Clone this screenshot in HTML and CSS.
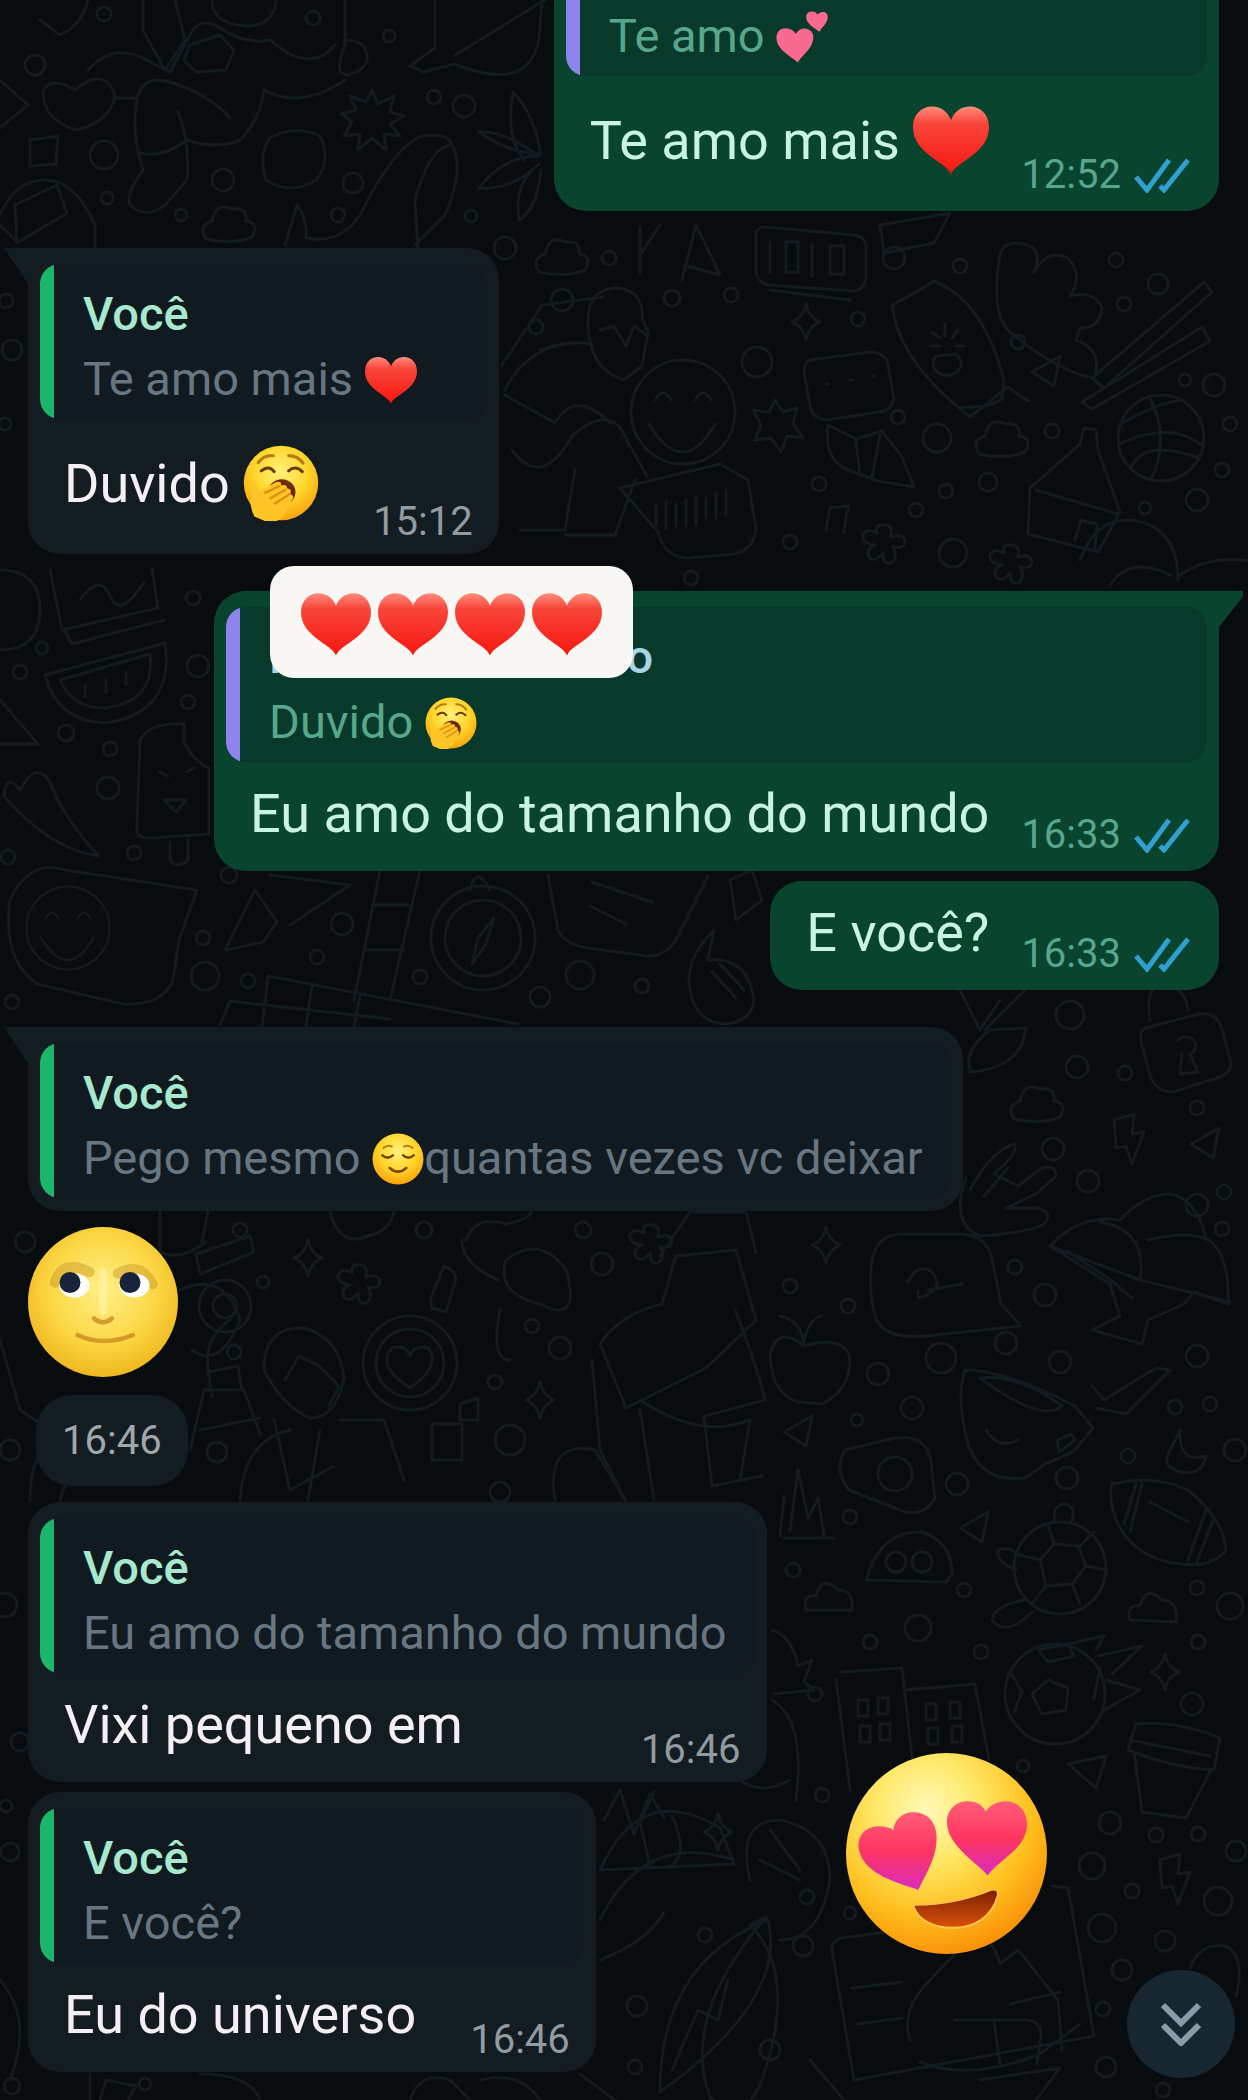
FILE: index.html
```html
<!DOCTYPE html>
<html lang="pt-BR">
<head>
    <meta charset="UTF-8">
    <meta name="viewport" content="width=device-width, initial-scale=1.0">
    <title>Conversa</title>
    <link rel="stylesheet" href="styles.css">
</head>
<body>
    <!-- emoji e ícones -->
    <svg class="sprites" width="0" height="0" aria-hidden="true">
        <defs>
            <linearGradient id="red" x1="0" y1="0" x2="0" y2="1">
                <stop offset="0" stop-color="#ff8d7c"/>
                <stop offset=".25" stop-color="#f9453a"/>
                <stop offset="1" stop-color="#f7170f"/>
            </linearGradient>
            <linearGradient id="pink" x1="0" y1="0" x2="0" y2="1">
                <stop offset="0" stop-color="#ff5d78"/>
                <stop offset=".5" stop-color="#fd3560"/>
                <stop offset="1" stop-color="#d92bc0"/>
            </linearGradient>
            <radialGradient id="face" cx=".5" cy=".35" r=".65">
                <stop offset="0" stop-color="#fff27a"/>
                <stop offset=".55" stop-color="#ffd62b"/>
                <stop offset="1" stop-color="#f9a30c"/>
            </radialGradient>
            <radialGradient id="glow" cx=".4" cy=".28" r=".75">
                <stop offset="0" stop-color="#fff9b8"/>
                <stop offset=".35" stop-color="#ffe866"/>
                <stop offset=".7" stop-color="#ffbf1d"/>
                <stop offset="1" stop-color="#f98e08"/>
            </radialGradient>
            <radialGradient id="lunar" cx=".5" cy=".42" r=".6">
                <stop offset="0" stop-color="#fff08a"/>
                <stop offset=".6" stop-color="#fbd743"/>
                <stop offset="1" stop-color="#eeb41c"/>
            </radialGradient>
            <linearGradient id="mouth" x1="0" y1="0" x2="0" y2="1">
                <stop offset="0" stop-color="#7c1f06"/>
                <stop offset="1" stop-color="#d95309"/>
            </linearGradient>
        </defs>
        <symbol id="heart" viewBox="0 0 100 100">
            <path fill="url(#red)" d="M50 95C43 78 0 68 0 33 0 16 12 6 25 6c12 0 21 7 25 18C54 13 63 6 75 6c13 0 25 10 25 27 0 35-43 45-50 62z"/>
        </symbol>
        <symbol id="two-hearts" viewBox="0 0 100 100">
            <path fill="#f96a90" d="M42 99C30 88 3 76 1 54 0 40 8 33 18 33c9 0 16 4 20 11 4-8 13-12 21-10 10 3 15 11 12 23-5 20-22 28-29 42z"/>
            <path fill="#f96a90" d="M84 40C75 33 58 25 58 12 58 4 64 0 70 1c5 0 8 3 10 6 3-4 8-6 12-5 6 1 9 7 7 14-3 11-11 15-15 24z"/>
        </symbol>
        <symbol id="yawn" viewBox="0 0 100 100">
            <circle cx="50" cy="50" r="49" fill="url(#face)"/>
            <path d="M20 23q8-10 20-9M60 14q12 0 19 10" fill="none" stroke="#b57b10" stroke-width="4" stroke-linecap="round"/>
            <path d="M24 34q10-8 17 1M60 34q9-8 18 1" fill="none" stroke="#6d3b08" stroke-width="4" stroke-linecap="round"/>
            <ellipse cx="51" cy="62" rx="18" ry="17" fill="#6b2b08"/>
            <path d="M15 94Q7 80 12 60q2-9 7-6l2 8 22-13q8-2 7 4 8-2 8 4 7 1 4 7 7 3 2 9L53 94q-8 9-22 7z" fill="#ffc526"/>
            <path d="M29 63l19-9M36 70l20-11M42 77l19-12" fill="none" stroke="#dc8f11" stroke-width="3" stroke-linecap="round"/>
        </symbol>
        <symbol id="relieved" viewBox="0 0 100 100">
            <circle cx="50" cy="50" r="49" fill="url(#face)"/>
            <path d="M22 29q8-7 16-3M62 26q9-4 16 3" fill="none" stroke="#bb7e12" stroke-width="4" stroke-linecap="round"/>
            <path d="M20 43q10 9 20 0M60 43q10 9 20 0M34 67q16 15 32 0" fill="none" stroke="#7a450b" stroke-width="5" stroke-linecap="round"/>
        </symbol>
        <symbol id="moon-face" viewBox="0 0 100 100">
            <circle cx="50" cy="50" r="50" fill="url(#lunar)"/>
            <path d="M18 37q5-16 23-7M60 31q15-8 23 7" fill="none" stroke="#c08a20" stroke-width="7" stroke-linecap="round" opacity=".4"/>
            <ellipse cx="31" cy="39" rx="10" ry="8" fill="#fff"/>
            <ellipse cx="71" cy="39" rx="10" ry="8" fill="#fff"/>
            <circle cx="28" cy="37" r="7" fill="#17243b"/>
            <circle cx="68" cy="37" r="7" fill="#17243b"/>
            <path d="M44 61q6 5 12 0M33 72q17 8 37 0" fill="none" stroke="#c98b20" stroke-width="3" stroke-linecap="round" opacity=".8"/>
            <path d="M50 30v26" stroke="#fff4a6" stroke-width="5" stroke-linecap="round" opacity=".7"/>
        </symbol>
        <symbol id="heart-eyes" viewBox="0 0 200 200">
            <circle cx="100" cy="100" r="100" fill="url(#glow)"/>
            <path fill="url(#pink)" d="M72 136C54 130 18 121 13 97 10 82 20 74 31 73c7 0 13 1 16 4C48 66 57 58 69 59c15 1 23 14 21 31-2 18-11 31-18 46z"/>
            <path fill="url(#pink)" d="M141 122c-10-12-36-27-40-48-3-15 7-26 20-26 9 0 15 4 18 10 4-6 12-10 20-10 14 0 22 12 21 26-3 23-27 31-39 48z"/>
            <path fill="url(#mouth)" stroke="#ffc24a" stroke-width="2" d="M69 151q40 0 76-15c5-1 7 1 6 6-6 22-24 32-45 32-20 0-33-8-38-19-1-3-1-4 1-4z"/>
        </symbol>
        <symbol id="ticks" viewBox="0 0 58 36">
            <path d="M3 20l11 13L36 3M27 29l4 4L55 3" fill="none" stroke="#2fa0cf" stroke-width="5"/>
        </symbol>
    </svg>

    <div class="chat">
        <svg class="wallpaper" viewBox="0 0 1248 2100" preserveAspectRatio="xMidYMid slice" aria-hidden="true">
            <defs>
                <path id="spark" d="M0-18q3 14 14 18-11 4-14 18-3-14-14-18 11-4 14-18z"/>
                <path id="cloud" d="M-24 14q-8-14 6-18 4-20 20-12 16-2 14 12 14 2 6 16-20 8-46 2z"/>
                <path id="flower" d="M0-20q8 0 6 12 12-4 14 4 0 8-12 6 6 10-2 16-8 2-8-10-8 10-14 4-4-8 6-12-14-2-12-10 4-8 14-2-2-10 8-8z"/>
                <path id="tri" d="M-14 2L14-14 8 16z"/>
                <path id="bolt" d="M-14-20L6-26 4-6 16-8 4 24-2 6-12 8z"/>
                <g id="smile"><circle r="52"/><path d="M-28-12q8-14 16 0M12-12q8-14 16 0M-34 12q34 56 66 0"/></g>
                <g id="ball"><circle r="43"/><path d="M-40-14Q-6-34 20-38M-42 6Q10-18 42 8M-30 30Q-18 0 38 20M-12-42Q10 0-10 42"/></g>
                <path id="bubble" d="M-62-26q6-22 30-22h56q30 0 34 30l8 40 20 22-96 10q-42 4-50-20-8-30-2-60z"/>
            </defs>
            <!-- topo -->
            <path d="M88 70q27-30 62-8l20 10 20-37q10-20 30-7 25 17 50 12 40 35 65 5M138 95q7-20 32-13 40 13 60 36M138 95q-8 35 5 75-18 25-13 35 15 15 35 0l22-25q3-40-9-68M138 152q22 8 49-12 28 10 53 0 20-20 24-50 36 20 81-10M143 0v30l22 40 20-30-10-40M345 0v45q-12 30 2 30 22-5 20-20-2-15-22-15M0 80l28 25L0 128M40 20l20 15Q82 25 88 0M212 0q0 24 34 26 28 0 30-26"/>
            <path d="M75 90Q50 75 43 92q0 28 34 38 33-8 38-34Q105 65 75 90zM115 98h20M190 45l30-10 14 15-8 20-30 2-12-12zM435 0v48l-25 18 14 6 30-8q75 30 85-25l3-39M455 55L545 0"/>
            <path d="M372 90l6 14 16-8-4 16 14 4-14 8 10 12-16-2 2 16-14-12-14 12 2-16-16 2 8-14-10-8 14-4-6-14 16 6zM270 138q25-14 50-2 12 24-4 44-26 16-50 0-8-26 4-42zM285 245l12-40q11 15 9 33 34 7 54-23 40-80 70-80 20 0 22 10-22 0-37 55l3 50M452 145q13 25-7 70l-30 30M525 160q-20-20-12-68 20 20 28 62-30 0-62-22 24-2 60 24-36 0-60 32 34 2 60-24-26 20-20 56 18-10 22-50"/>
            <path d="M30 140l28-4-2 28-26 2zM0 215q15-35 45-35t50 45v25M15 205l42-20 10 28-50 30zM0 225l18 18"/>
            <use href="#cloud" x="230" y="225"/>
            <!-- direita, entre o topo e a resposta -->
            <use href="#cloud" x="563" y="258"/>
            <path d="M640 228v45M660 225l-20 30M682 280l14-55 24 50-36-10M756 235q0-8 10-8l88 8q12 2 12 12v30q-2 14-14 14l-84-6q-12-4-12-14zM770 242v30M786 242v30h12v-30zM812 244v32M830 246v28h14v-28zM770 290l80 10M880 225l70-12-16 30-50 10zM1000 254q4-14 24-10t10 28q14-24 34-14 16 18 2 38 24-6 32 12-2 20-22 20l-4 12q28 10 18 38-36-6-84-46-20-18-10-78zM892 305q20-10 42-24 50 20 70 100l-2 18q-14 10-44 8-60-50-66-102zM958 407l12 10 38-30 20 14"/>
            <path d="M945 324v12M932 332l8 6M958 330l-6 8M930 346h10M964 346h-8M936 356a14 12 0 1 0 20-2z"/>
            <path d="M1092 378l112-96 8 10-108 96zM1082 402l120-75 8 14-118 68zM588 320q0-30 28-32 28 2 26 30l6 14-6 34-18 14q-36-10-36-60zM600 330l14-4 12 20 8-20 14 10M540 350q30-10 50-6M505 390q20-40 60-46M505 395l50 28q20-35 55 0M512 450q30 40 60-14 40-35 55 5l20 35M575 470l-10 60H520M635 480l-20 55h-50M810 360l60-8q16 0 18 14l6 32q-2 12-14 14l-54 8q-14-2-16-14l-6-34q0-10 6-12zM826 384h2M850 380h2M872 376h2"/>
            <path d="M828 425l28 14 26-8 20 26 12 30-36-6-32-12q-22-10-18-44zM856 440l4 36M880 434l-8 44M775 400l8 12 14-4-4 16 10 14-16-2-6 16-10-14-16 2 6-16-8-14 16 2zM620 488l100-24 28 16 8 48q-2 22-22 26l-44 4q-26 0-32-26zM656 506v18M666 502v26M676 504v22M686 500v26M696 496v28M706 498v20M716 494v24M726 490v24M1030 488l50-44 4-16 12 2 2 20 22 62-22 40-70-18zM1036 490l82 24M1075 540l6-20 16 4-2 24M826 530l4-22 18-2-4 26M502 365l40-60 60-8M1080 560q14-40 48-40 50 4 50 60M1180 575q30-20 68-14M1110 585q20-30 60-10"/>
            <use href="#smile" x="683" y="412"/><use href="#ball" x="1161" y="438"/>
            <use href="#spark" x="806" y="322"/><use href="#tri" x="1046" y="370"/><use href="#flower" x="1012" y="565"/><use href="#flower" x="885" y="545"/><use href="#cloud" x="1003" y="440"/>
            <!-- esquerda, meio -->
            <path d="M0 570q40 0 40 40t-40 40M50 570l12 60 96-22-6-40M64 630l8 14 92-24M80 600q20-28 30-4t34-14M45 675l120-32q10 70-60 80-48-2-60-48zM60 680l90-26q6 48-46 54-32 0-44-28zM85 686v10M106 680v12M126 672v12M0 700l38 44H0M140 740q10-18 44-16v18q10 20 25 26v66l-60 4q-14 0-12-12zM160 772l8 4M186 772l8-4M164 800h22l-10 12zM170 842v18q8 10 18 0v-20M20 790q16-30 30-8 10 30 48 74-50-8-94-60 2-24 16-6z"/>
            <path d="M15 890q20-30 50-20l132 20-18 50-6 40q-10 26-50 24l-86-20Q2 960 10 900zM225 950l30-60 22 32-14 20-36 8zM270 875l80 10-60 40M380 870l-26 130M420 870l-30 130M372 905h36M366 950h38M220 1025l10-24 160 18M268 976l250 48M268 976l-6 50M312 986l-6 40M360 996l-6 30M548 875l10 55q6 14 30 18l60 8q20 0 30-20l30-60M592 882l60 20M590 906l36 18M690 990q-6-30 24-60l-6 30q40-4 46 40-2 20-26 24-32 0-38-34zM712 972l24 26M720 964l24 26M730 880l22-10 10 30-26 20z"/>
            <circle cx="483" cy="938" r="52"/><circle cx="483" cy="938" r="38"/><path d="M494 918l-8 26-14 20 6-26zM470 890q6-26 20 0"/>
            <use href="#smile" transform="translate(68 928) scale(.8)"/>
            <!-- direita, embaixo da conversa -->
            <path d="M1145 1028l54-14q16-2 22 12l10 36q0 12-14 16l-44 14q-16 0-22-14l-10-36q-2-10 4-14zM1150 1020q-6-40 18-32 16-2 20 22M1178 1040a10 9 0 1 1 12 14l8 18-18 2 2-20M970 1070q-6-20 20-40l36-2q-4 40-56 44M960 990l20 40 20-30M985 1030l40-40M970 1190q20-38 44-46 6 8-20 30l24 12 24-18q14-4 14 8l-20 18-30 14h32q14 4 8 14-10 10-66 14-30-12-14-58M984 1196l24-28M1050 1246q30-32 70-26 24-26 50-26 26 4 36 44 24 14 22 66l-34-12-10 12-36 16-6 24-50-14 28-14-10-32zM1050 1246l90 34q8-50-40-58M1140 1280l90 22M1148 1240q40-10 60 0M1068 1252l40 26 24 20"/>
            <use href="#bubble" x="935" y="1282"/><path d="M908 1282q10-20 24-10 12 14-4 22-12 8-10-2M928 1290l34-6"/>
            <path d="M804 1346q-28-22-34 10 2 38 28 46l24 2q28-14 28-44-4-26-46-14zM804 1346q-2-26-24-30M804 1340q6-22 18-24M965 1370q40 0 110 36l18 22-20 24-28 12-20 14q-50 6-60-46-8-40 0-62zM980 1378q40-4 82 28-20 18-82-28zM986 1430q12 20 32 10M1075 1440l-16 12-2-12 14-6zM1092 1386l12 14 52-32 14 2-44 44-30-6M1170 1450l10-20q-2 34 26 26-4 20-24 16-22-4-12-22zM845 1450l50-12q32-4 36 24l4 36q-10 18-30 14l-56-22q-16-20-4-40z"/>
            <circle cx="895" cy="1474" r="17"/>
            <path d="M1112 1484q44-10 76 6 36 30 38 60-14 18-44 14-48-4-66-44-8-24-4-36zM1136 1484l-12 40M1142 1484l-12 48M1206 1510l-18 50M1214 1518l-18 46M1150 1502l38 20M866 1580q14-50 56-48 30 10 30 42l-6 8zM784 1538h50M780 1536l4-40M790 1530l8-60 10 48 10-20 6 38M806 1610q-4-16 10-14 6-22 22-6 16 0 14 20zM1130 1620q-4-16 10-14 6-22 22-6 16 0 14 22z"/>
            <circle cx="896" cy="1562" r="10"/><circle cx="922" cy="1562" r="10"/>
            <circle cx="1060" cy="1568" r="46"/><path d="M1040 1560l14-16 24 2 8 20-14 18-26 2zM1054 1544l-6-20M1080 1546l14-14M1086 1566l20 4M1072 1584l8 20M1046 1586l-14 18M1040 1560l-24-6M1055 1522q-4-18 12-18 10 6 4 18M1016 1570q-20-8-18-20 12-4 22 6M1024 1600q-30 6-32 20 14 18 40-8"/>
            <circle cx="1055" cy="1694" r="50"/><path d="M1032 1694l16-14 20 8-2 22-24 4zM1038 1650l30-6 6 12-26 6zM1010 1672l12 20-8 20M1100 1668l-6 30M1060 1646l44-10-8 14M1098 1656l44-10-30 28M1106 1680l34 10-36 20"/>
            <path d="M842 1672l60-4 10 90M836 1680l14 110M905 1690l70-6 14 76M858 1700h10v16h-10zM878 1698h10v16h-10zM860 1726h10v16h-10zM880 1724h10v16h-10zM926 1704h10v16h-10zM950 1702h10v16h-10zM928 1728h10v16h-10zM952 1726h10v16h-10zM1136 1724q40-4 84 14l-6 32q-40-2-86-20zM1134 1752l8 60 44 6 24-46M1130 1740l80 16M1068 1764l38-8-10 32z"/>
            <path d="M832 1950q0-10 10-12l60-8M832 1950l22 130 240-44-26-148-16-2M910 2040q-10-30 20-60l40-42q20-8 30 26l18-14 40 50 4 50M920 2062q50 20 120-8l40-30M955 2020h70q16 0 16 16l-4 28M994 2020l6 44M1010 2004l50-12M852 1988l50-6M858 2024l44-6M810 2060l34 40M1190 1968q10-26 36-22 20 10 10 50M980 2080l80-12-24 32"/>
            <!-- esquerda, embaixo -->
            <path d="M160 1212v40q20 10 46-10M208 1212l-6 30M196 1254l54-18 4 16-54 22zM180 1290q44-20 60 30-20 50-48 30M330 1212q10 36 38 24 24-6 26-26M466 1240q10-26 40-16 30-6 24-16M462 1240q0 24 36 40M506 1260q34-26 60 10 16 56-26 34-44-10-34-44zM430 1300l14-34q16 6 10 20l-8 26-14-4zM600 1344q20-30 62-40l14-48 60-6 20 70-50 48-80 40zM660 1256l30-44h56l10 40M592 1360l8 90 20 40M640 1400q60 40 110 20l-10 60M735 1310q20 50 30 90l-60 16M640 1410l14 90M704 1416l8 70 50-10"/>
            <circle cx="410" cy="1363" r="47"/><circle cx="410" cy="1363" r="34"/><path d="M410 1388q-34-22-18-40 14-4 18 8 4-12 18-8 14 18-18 40z"/>
            <path d="M264 1370q0-44 40-42 36 10 40 50-8 40-34 40-28-12-46-48zM285 1380l14-24 20 10 20 20-10 20M230 1320q-30 20-20 60M190 1450l14-60h40l16 44M212 1396l-4-24 30-6 4 24M200 1430l60-12M274 1420l16 70 44-24M240 1500q4-60 50-70M340 1420h44l20 60M320 1430l-12 70M432 1424h30v36h-30zM460 1420v-16l18-6v22zM0 1340l20 70 30 20M30 1500q0-60 40-70M60 1500q10-40 50-40M555 1500q-10-60 40-50l30 50M500 1310q-10 50 10 50"/>
            <path d="M772 1630q20 6 26 36l14-6-8 22 10 8-40 4M772 1700q34 20 24 100M600 1870q40-90 120-42l14 36zM600 1920q44-90 134-60M600 1960q50-20 64-48M650 1866l-10-44 14-30M670 1866q20-10 2-50M604 1820l16-30 14 44 16-40 14 24M750 1925q50 50 10 160-20 40-50 12-30-80 56-180zM660 2092q0-130 108-172 20 80-108 172zM672 2070l26-60 20 10 10-40M750 1880q-14-60 30-60 50 10 50 60-10 60-50 60M770 1830l30 40M760 1860l40 20M730 1770q24 30 60 10M0 1980q34 40 10 100M90 2074v26M100 2100l6-20 30 6-8 14M200 2074q50 0 60 26M410 2100q10-30 40-20l20 20M580 2074l40 30M480 2080q40-10 60 20"/>
            <use href="#flower" x="360" y="1285"/><use href="#flower" x="652" y="1245"/><use href="#spark" x="308" y="1258"/><use href="#spark" x="540" y="1400"/><use href="#spark" x="1165" y="1672"/><use href="#spark" x="718" y="1832"/><use href="#spark" x="826" y="1245"/><use href="#cloud" x="1038" y="1105"/><use href="#bolt" x="1128" y="1140"/><use href="#tri" x="1205" y="1142"/><use href="#tri" x="974" y="1526"/><use href="#tri" x="798" y="1430"/><use href="#bolt" x="1174" y="1880"/>
            <!-- bolinhas -->
            <g>
                <circle cx="104" cy="14" r="7"/><circle cx="35" cy="65" r="10"/><circle cx="313" cy="18" r="7"/><circle cx="389" cy="36" r="6"/><circle cx="104" cy="155" r="14"/><circle cx="223" cy="180" r="11"/><circle cx="353" cy="183" r="10"/><circle cx="434" cy="97" r="7"/><circle cx="464" cy="106" r="11"/><circle cx="107" cy="198" r="6"/><circle cx="181" cy="215" r="6"/><circle cx="338" cy="215" r="7"/><circle cx="471" cy="216" r="6"/><circle cx="505" cy="248" r="11"/>
                <circle cx="609" cy="258" r="7"/><circle cx="562" cy="300" r="11"/><circle cx="536" cy="327" r="7"/><circle cx="672" cy="298" r="8"/><circle cx="731" cy="295" r="7"/><circle cx="894" cy="258" r="11"/><circle cx="960" cy="266" r="7"/><circle cx="1116" cy="260" r="7"/><circle cx="1158" cy="284" r="10"/><circle cx="1124" cy="304" r="7"/><circle cx="858" cy="319" r="7"/><circle cx="757" cy="362" r="15"/><circle cx="937" cy="438" r="14"/><circle cx="898" cy="417" r="7"/><circle cx="1018" cy="342" r="7"/><circle cx="1214" cy="385" r="11"/><circle cx="1185" cy="380" r="6"/><circle cx="1052" cy="431" r="7"/><circle cx="1230" cy="424" r="7"/><circle cx="819" cy="484" r="7"/><circle cx="946" cy="491" r="7"/><circle cx="988" cy="482" r="9"/><circle cx="916" cy="510" r="7"/><circle cx="790" cy="542" r="7"/><circle cx="953" cy="553" r="14"/><circle cx="1197" cy="500" r="11"/><circle cx="1145" cy="508" r="6"/><circle cx="1222" cy="470" r="7"/><circle cx="691" cy="578" r="7"/>
                <circle cx="6" cy="301" r="7"/><circle cx="12" cy="350" r="10"/><circle cx="5" cy="424" r="6"/>
                <circle cx="193" cy="598" r="7"/><circle cx="42" cy="648" r="6"/><circle cx="20" cy="672" r="7"/><circle cx="198" cy="666" r="11"/><circle cx="188" cy="702" r="7"/><circle cx="66" cy="733" r="8"/><circle cx="110" cy="749" r="7"/><circle cx="108" cy="788" r="11"/><circle cx="134" cy="853" r="7"/><circle cx="8" cy="857" r="7"/><circle cx="229" cy="875" r="8"/><circle cx="342" cy="924" r="11"/><circle cx="203" cy="938" r="7"/><circle cx="317" cy="957" r="7"/><circle cx="205" cy="976" r="14"/><circle cx="248" cy="981" r="7"/><circle cx="420" cy="977" r="7"/><circle cx="580" cy="975" r="14"/><circle cx="540" cy="997" r="10"/><circle cx="642" cy="986" r="7"/><circle cx="12" cy="1002" r="7"/>
                <circle cx="1070" cy="1015" r="14"/><circle cx="1077" cy="1067" r="11"/><circle cx="1125" cy="1073" r="7"/><circle cx="1053" cy="1149" r="11"/><circle cx="1088" cy="1181" r="11"/><circle cx="1197" cy="1108" r="7"/><circle cx="1197" cy="1205" r="11"/><circle cx="1224" cy="1192" r="7"/><circle cx="1222" cy="1229" r="7"/><circle cx="1015" cy="1267" r="7"/><circle cx="1045" cy="1295" r="11"/><circle cx="1006" cy="1343" r="11"/><circle cx="1060" cy="1362" r="11"/><circle cx="1197" cy="1356" r="11"/><circle cx="941" cy="1358" r="15"/><circle cx="878" cy="1374" r="11"/><circle cx="912" cy="1408" r="11"/><circle cx="857" cy="1420" r="6"/><circle cx="790" cy="1286" r="7"/><circle cx="848" cy="1306" r="7"/><circle cx="957" cy="1484" r="11"/><circle cx="1067" cy="1478" r="11"/><circle cx="1175" cy="1407" r="7"/><circle cx="1210" cy="1404" r="7"/><circle cx="1235" cy="1450" r="11"/><circle cx="1128" cy="1456" r="7"/><circle cx="850" cy="1517" r="7"/><circle cx="964" cy="1590" r="7"/><circle cx="793" cy="1570" r="7"/><circle cx="918" cy="1628" r="13"/><circle cx="870" cy="1642" r="7"/><circle cx="981" cy="1652" r="7"/><circle cx="1197" cy="1588" r="7"/><circle cx="1230" cy="1606" r="13"/><circle cx="1198" cy="1642" r="7"/><circle cx="1192" cy="1704" r="11"/><circle cx="815" cy="1694" r="7"/>
                <circle cx="240" cy="1230" r="7"/><circle cx="424" cy="1230" r="8"/><circle cx="583" cy="1230" r="8"/><circle cx="25" cy="1242" r="10"/><circle cx="263" cy="1282" r="6"/><circle cx="602" cy="1264" r="11"/><circle cx="225" cy="1306" r="26"/><circle cx="225" cy="1306" r="12"/><circle cx="560" cy="1348" r="11"/><circle cx="532" cy="1326" r="7"/><circle cx="234" cy="1352" r="7"/><circle cx="495" cy="1382" r="7"/><circle cx="510" cy="1440" r="15"/><circle cx="217" cy="1452" r="10"/><circle cx="500" cy="1492" r="10"/><circle cx="10" cy="1450" r="10"/>
                <circle cx="5" cy="1605" r="12"/><circle cx="20" cy="1742" r="9"/><circle cx="6" cy="1806" r="6"/><circle cx="10" cy="1852" r="9"/><circle cx="705" cy="1935" r="7"/><circle cx="637" cy="2006" r="10"/><circle cx="635" cy="2067" r="7"/><circle cx="770" cy="2050" r="10"/><circle cx="12" cy="2086" r="8"/><circle cx="145" cy="2084" r="6"/>
                <circle cx="1023" cy="1766" r="6"/><circle cx="1110" cy="1823" r="11"/><circle cx="1156" cy="1835" r="7"/><circle cx="1198" cy="1834" r="7"/><circle cx="1092" cy="1866" r="13"/><circle cx="1236" cy="1851" r="10"/><circle cx="1132" cy="1891" r="7"/><circle cx="1218" cy="1901" r="14"/><circle cx="1102" cy="1928" r="14"/><circle cx="1165" cy="1941" r="10"/><circle cx="1122" cy="1970" r="10"/><circle cx="1103" cy="2009" r="7"/><circle cx="1106" cy="2067" r="10"/><circle cx="1163" cy="2090" r="7"/><circle cx="822" cy="1795" r="7"/><circle cx="807" cy="1897" r="7"/><circle cx="803" cy="1946" r="10"/><circle cx="850" cy="1913" r="6"/>
            </g>
        </svg>

        <main class="messages">
            <article class="bubble out">
                <div class="quote">
                    <p class="quoted">Te amo <svg class="emoji"><use href="#two-hearts"/></svg></p>
                </div>
                <div class="content">
                    <p class="text has-emoji">Te amo mais <svg class="emoji"><use href="#heart"/></svg></p>
                    <div class="meta"><time>12:52</time><svg class="ticks"><use href="#ticks"/></svg></div>
                </div>
            </article>

            <article class="bubble in tail">
                <div class="quote">
                    <p class="author">Você</p>
                    <p class="quoted">Te amo mais <svg class="emoji"><use href="#heart"/></svg></p>
                </div>
                <div class="content">
                    <p class="text has-emoji">Duvido <svg class="emoji"><use href="#yawn"/></svg></p>
                    <div class="meta"><time>15:12</time></div>
                </div>
            </article>

            <article class="bubble out tail">
                <div class="cover">
                    <svg><use href="#heart"/></svg>
                    <svg><use href="#heart"/></svg>
                    <svg><use href="#heart"/></svg>
                    <svg><use href="#heart"/></svg>
                </div>
                <div class="quote">
                    <p class="author covered"><span>M</span><span>o</span></p>
                    <p class="quoted">Duvido <svg class="emoji"><use href="#yawn"/></svg></p>
                </div>
                <div class="content">
                    <p class="text">Eu amo do tamanho do mundo</p>
                    <div class="meta"><time>16:33</time><svg class="ticks"><use href="#ticks"/></svg></div>
                </div>
            </article>

            <article class="bubble out grouped">
                <div class="content">
                    <p class="text">E você?</p>
                    <div class="meta"><time>16:33</time><svg class="ticks"><use href="#ticks"/></svg></div>
                </div>
            </article>

            <article class="bubble in tail reply-only">
                <div class="quote">
                    <p class="author">Você</p>
                    <p class="quoted">Pego mesmo <svg class="emoji"><use href="#relieved"/></svg>quantas vezes vc deixar</p>
                </div>
            </article>
            <svg class="big-emoji"><use href="#moon-face"/></svg>
            <time class="time-pill">16:46</time>

            <article class="bubble in after-pill">
                <div class="quote">
                    <p class="author">Você</p>
                    <p class="quoted">Eu amo do tamanho do mundo</p>
                </div>
                <div class="content">
                    <p class="text">Vixi pequeno em</p>
                    <div class="meta"><time>16:46</time></div>
                </div>
            </article>

            <article class="bubble in grouped">
                <div class="quote">
                    <p class="author">Você</p>
                    <p class="quoted">E você?</p>
                </div>
                <div class="content">
                    <p class="text">Eu do universo</p>
                    <div class="meta"><time>16:46</time></div>
                </div>
            </article>
        </main>

        <svg class="love-sticker"><use href="#heart-eyes"/></svg>
        <button class="scroll-down" type="button" aria-label="Ir para o fim">
            <svg viewBox="0 0 40 44"><path d="M2 3l18 18L38 3M2 23l18 18 18-18"/></svg>
        </button>
    </div>
</body>
</html>
```
FILE: styles.css
```css
* {
    margin: 0;
    padding: 0;
    box-sizing: border-box;
}

body {
    font-family: Roboto, sans-serif;
    background-color: #090c0e;
}

.sprites {
    position: absolute;
}

.chat {
    position: relative;
    height: 100vh;
    overflow: hidden;
}

.wallpaper {
    position: absolute;
    inset: 0;
    width: 100%;
    height: 100%;
    fill: none;
    stroke: #121b20;
    stroke-width: 3;
    stroke-linejoin: round;
    stroke-linecap: round;
}

/* as mensagens ficam presas ao fim da tela */
.messages {
    position: relative;
    height: 100%;
    display: flex;
    flex-direction: column;
    justify-content: flex-end;
    align-items: flex-start;
    padding: 0 29px 28px 28px;
}

.messages > * {
    flex-shrink: 0;
}

.bubble {
    position: relative;
    margin-top: 37px;
    border-radius: 32px;
    background-color: #131c20;
    color: #f3eff3;
}

.bubble.out {
    align-self: flex-end;
    background-color: #09442f;
    color: #c8f4e0;
}

.bubble.grouped {
    margin-top: 10px;
}

.bubble.after-pill {
    margin-top: 16px;
}

.bubble.in.tail {
    border-top-left-radius: 0;
}

.bubble.out.tail {
    border-top-right-radius: 0;
}

.bubble:has(.quote) {
    padding-top: 16px;
}

.tail::before {
    content: '';
    position: absolute;
    top: 0;
    width: 24px;
    height: 36px;
    background-color: inherit;
}

.in.tail::before {
    right: 100%;
    clip-path: polygon(0 0, 100% 0, 100% 100%);
}

.out.tail::before {
    left: 100%;
    clip-path: polygon(0 0, 100% 0, 100% 15%, 0 100%);
}

.quote {
    position: relative;
    display: flex;
    flex-direction: column;
    justify-content: flex-end;
    min-height: 155px;
    margin: 0 12px;
    padding: 0 28px 8px 43px;
    border-radius: 20px;
    overflow: hidden;
    background-color: #111921;
    font-size: 47px;
    line-height: 65px;
    white-space: nowrap;
}

.quote::before {
    content: '';
    position: absolute;
    top: 0;
    bottom: 0;
    left: 0;
    width: 14px;
    background-color: #1db56c;
}

.out .quote {
    background-color: #09392b;
}

.out .quote::before {
    background-color: #8f84ed;
}

.author {
    font-weight: 500;
    color: #a7e9ce;
}

.out .author {
    color: #a9d3e6;
}

.quoted {
    color: #687682;
}

.out .quoted {
    color: #56a78c;
}

.covered {
    display: flex;
    justify-content: space-between;
    width: 384px;
}

.emoji {
    width: 52px;
    height: 52px;
    vertical-align: -11px;
}

.text .emoji {
    width: 76px;
    height: 76px;
    vertical-align: -19px;
}

.content {
    display: flex;
    justify-content: space-between;
    align-items: flex-end;
    gap: 54px;
    padding: 20px 26px 12px 36px;
}

.out .content {
    gap: 32px;
    padding: 20px 28px 16px 36px;
}

.text {
    margin-bottom: 13px;
    font-size: 54px;
    line-height: 64px;
    white-space: nowrap;
}

.out .text {
    margin-bottom: 9px;
}

.text.has-emoji {
    line-height: 90px;
}

.meta {
    display: flex;
    align-items: center;
    gap: 12px;
    font-size: 40px;
    line-height: 40px;
    color: #929b9f;
}

.out .meta {
    color: #56a78c;
}

.ticks {
    width: 58px;
    height: 36px;
}

.reply-only {
    padding-bottom: 13px;
}

.reply-only .quote {
    background-color: #121a21;
}

.big-emoji {
    width: 150px;
    height: 150px;
    margin-top: 16px;
}

.time-pill {
    margin: 18px 0 0 8px;
    padding: 22px 26px;
    border-radius: 36px;
    background-color: #131d21;
    color: #a0a7aa;
    font-size: 40px;
    line-height: 47px;
}

/* adesivo que esconde o nome do contato */
.cover {
    position: absolute;
    z-index: 1;
    top: -25px;
    left: 56px;
    display: flex;
    gap: 7px;
    padding: 23px 31px 19px;
    border-radius: 24px;
    background-color: #f9f7f3;
}

.cover svg {
    width: 70px;
    height: 70px;
}

.love-sticker {
    position: absolute;
    right: 201px;
    bottom: 146px;
    width: 201px;
    height: 201px;
}

.scroll-down {
    position: absolute;
    right: 13px;
    bottom: 22px;
    display: flex;
    justify-content: center;
    align-items: center;
    width: 108px;
    height: 108px;
    border: none;
    border-radius: 50%;
    background-color: #172731;
    cursor: pointer;
}

.scroll-down svg {
    width: 40px;
    height: 44px;
    fill: none;
    stroke: #8a9baa;
    stroke-width: 6;
}
```
